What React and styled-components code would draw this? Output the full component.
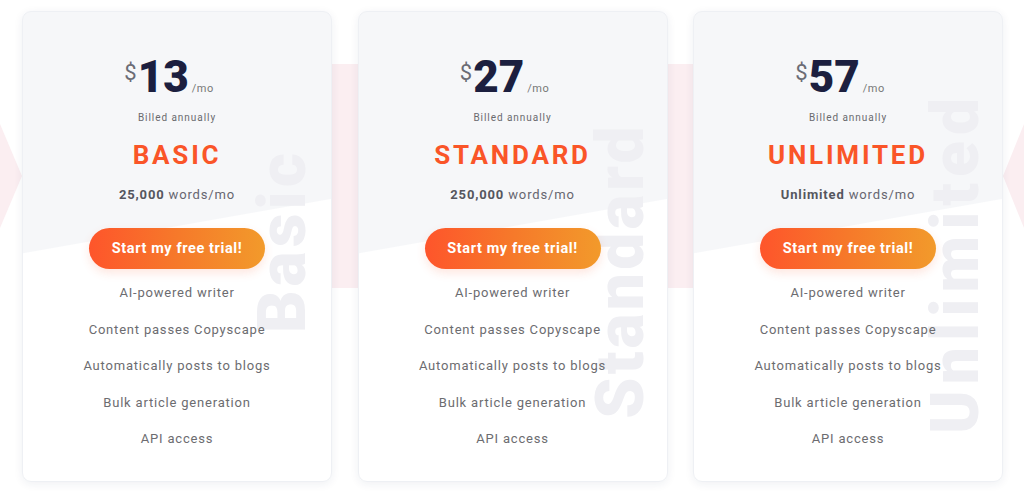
import React from "react";
import styled, { createGlobalStyle } from "styled-components";

const GlobalStyle = createGlobalStyle`
  html, body {
    margin: 0;
    padding: 0;
    background: #ffffff;
  }
  body {
    font-family: Roboto, "Liberation Sans", sans-serif;
  }
`;

const Page = styled.div`
  position: relative;
  width: 1024px;
  height: 494px;
  overflow: hidden;
  background: #ffffff;
`;

const Decor = styled.svg`
  position: absolute;
  left: 0;
  top: 0;
  width: 1024px;
  height: 494px;
  z-index: 0;
`;

const Cards = styled.div`
  position: relative;
  z-index: 1;
  display: grid;
  grid-template-columns: repeat(3, 310px);
  gap: 25.5px;
  padding: 11px 0 0 22px;
`;

const Card = styled.div`
  position: relative;
  height: 471px;
  box-sizing: border-box;
  border-radius: 9px;
  border: 1px solid #eef0f4;
  box-shadow: 0 2px 10px rgba(30, 40, 80, 0.07);
  background: linear-gradient(
    170deg,
    #f6f7f9 0%,
    #f6f7f9 46%,
    #ffffff 46.2%,
    #ffffff 100%
  );
  overflow: hidden;
  display: flex;
  flex-direction: column;
  align-items: center;
  padding-top: 43px;
`;

const Watermark = styled.div`
  position: absolute;
  left: ${(p) => p.x}px;
  top: ${(p) => p.y}px;
  transform: translate(-50%, -50%) rotate(-90deg);
  font-size: 66px;
  font-weight: 900;
  letter-spacing: ${(p) => p.spacing}px;
  color: #efeff3;
  white-space: nowrap;
  line-height: 1;
  z-index: 0;
`;

const Content = styled.div`
  position: relative;
  z-index: 1;
  display: flex;
  flex-direction: column;
  align-items: center;
  width: 100%;
`;

const PriceRow = styled.div`
  display: flex;
  align-items: baseline;
  height: 44px;
  line-height: 44px;
  margin-right: 16px;
`;

const Dollar = styled.span`
  font-size: 22px;
  color: #6b6c75;
  align-self: flex-start;
  line-height: 36px;
`;

const Amount = styled.span`
  font-size: 44px;
  font-weight: 900;
  color: #1c1f3f;
  margin-left: 1px;
`;

const Per = styled.span`
  font-size: 11px;
  color: #777;
  letter-spacing: 0.5px;
  margin-left: 3px;
`;

const Billed = styled.div`
  margin-top: 12px;
  font-size: 10px;
  line-height: 14px;
  color: #6a6a6e;
  letter-spacing: 0.95px;
`;

const PlanName = styled.div`
  margin-top: 15px;
  font-size: 26px;
  line-height: 30px;
  font-weight: 700;
  letter-spacing: 2.8px;
  color: #fa5528;
`;

const Words = styled.div`
  margin-top: 16px;
  font-size: 13px;
  line-height: 18px;
  color: #666670;
  letter-spacing: 0.85px;

  b {
    font-weight: 700;
    color: #55565e;
  }
`;

const TrialButton = styled.button`
  margin-top: 24px;
  width: 176px;
  height: 41px;
  border: none;
  border-radius: 21px;
  background: linear-gradient(90deg, #fe552b 0%, #f6792a 50%, #f29a2b 100%);
  color: #ffffff;
  font-family: Roboto, "Liberation Sans", sans-serif;
  font-size: 14.5px;
  font-weight: 700;
  letter-spacing: 0.6px;
  box-shadow: 0 4px 10px rgba(250, 90, 40, 0.15);
  cursor: pointer;
`;

const Features = styled.ul`
  list-style: none;
  margin: 14px 0 0;
  padding: 0;
  display: flex;
  flex-direction: column;
  align-items: center;
  gap: 16.6px;
`;

const Feature = styled.li`
  font-size: 13px;
  line-height: 20px;
  color: #6c6c70;
  letter-spacing: 0.8px;
`;

const plans = [
  { price: "13", name: "BASIC", words: "25,000", mark: "Basic", mx: 260, my: 229, sp: 4 },
  { price: "27", name: "STANDARD", words: "250,000", mark: "Standard", mx: 262, my: 259, sp: 3.2 },
  { price: "57", name: "UNLIMITED", words: "Unlimited", mark: "Unlimited", mx: 262, my: 251, sp: 6 },
];

const features = [
  "AI-powered writer",
  "Content passes Copyscape",
  "Automatically posts to blogs",
  "Bulk article generation",
  "API access",
];

export default function App() {
  return (
    <Page>
      <GlobalStyle />
      <Decor viewBox="0 0 1024 494">
        <polygon points="0,124 22,176 0,228" fill="#fbeef1" />
        <rect x="60" y="64" width="904" height="224" fill="#fbeef1" />
        <polygon points="1024,124 1003,176 1024,228" fill="#fbeef1" />
      </Decor>
      <Cards>
        {plans.map((plan) => (
          <Card key={plan.name}>
            <Watermark x={plan.mx} y={plan.my} spacing={plan.sp}>
              {plan.mark}
            </Watermark>
            <Content>
              <PriceRow>
                <Dollar>$</Dollar>
                <Amount>{plan.price}</Amount>
                <Per>/mo</Per>
              </PriceRow>
              <Billed>Billed annually</Billed>
              <PlanName>{plan.name}</PlanName>
              <Words>
                <b>{plan.words}</b> words/mo
              </Words>
              <TrialButton>Start my free trial!</TrialButton>
              <Features>
                {features.map((f) => (
                  <Feature key={f}>{f}</Feature>
                ))}
              </Features>
            </Content>
          </Card>
        ))}
      </Cards>
    </Page>
  );
}
